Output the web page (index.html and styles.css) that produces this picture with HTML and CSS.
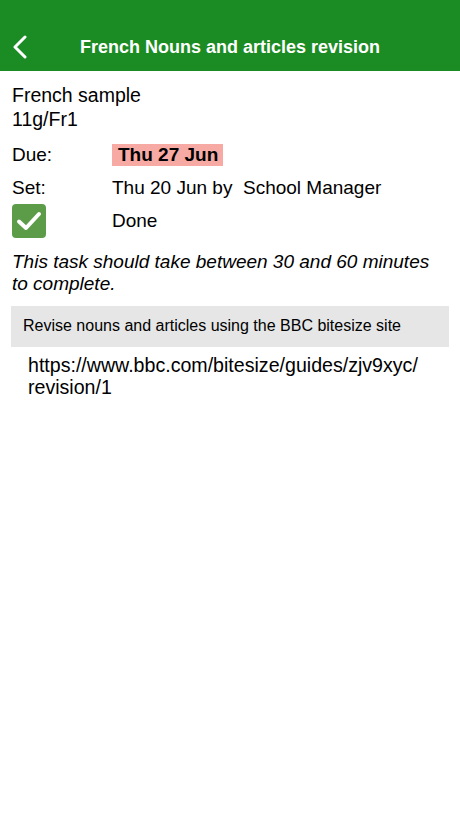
FILE: index.html
```html
<!DOCTYPE html>
<html lang="en">
<head>
    <meta charset="UTF-8">
    <meta name="viewport" content="width=device-width, initial-scale=1.0">
    <title>French Nouns and articles revision</title>
    <link rel="stylesheet" href="styles.css">
</head>
<body>
    <header class="nav-bar">
        <a class="back" href="#">
            <svg width="16" height="24" viewBox="0 0 16 24">
                <path d="M13 2 L3 12 L13 22" fill="none" stroke="#fff" stroke-width="3" stroke-linecap="round" stroke-linejoin="round"/>
            </svg>
        </a>
        <h1 class="nav-title">French Nouns and articles revision</h1>
    </header>

    <main class="task">
        <div class="group">
            <div>French sample</div>
            <div>11g/Fr1</div>
        </div>

        <div class="row row-due">
            <span class="label">Due:</span>
            <span class="due-date">Thu 27 Jun</span>
        </div>
        <div class="row row-set">
            <span class="label">Set:</span>
            <span>Thu 20 Jun by&nbsp; School Manager</span>
        </div>
        <div class="row row-done">
            <span class="label">
                <span class="checkbox">
                    <svg width="34" height="34" viewBox="0 0 34 34">
                        <path d="M7 17.5 L14 24 L27 10" fill="none" stroke="#fff" stroke-width="4" stroke-linecap="round" stroke-linejoin="round"/>
                    </svg>
                </span>
            </span>
            <span>Done</span>
        </div>

        <p class="duration">This task should take between 30 and 60 minutes to complete.</p>

        <div class="note">Revise nouns and articles using the BBC bitesize site</div>
        <p class="link">https://www.bbc.com/bitesize/guides/zjv9xyc/ revision/1</p>
    </main>
</body>
</html>
```

FILE: styles.css
```css
body {
    font-family: "Liberation Sans", Arial, sans-serif;
    background-color: #fff;
    color: #000;
    margin: 0;
    padding: 0;
}

.nav-bar {
    height: 71px;
    background-color: #1b8c23;
    display: flex;
    align-items: flex-end;
    justify-content: center;
    position: relative;
    box-sizing: border-box;
    padding-bottom: 12px;
}

.back {
    position: absolute;
    left: 12px;
    top: 35px;
    display: block;
    line-height: 0;
}

.nav-title {
    margin: 0;
    color: #fff;
    font-size: 18px;
    font-weight: bold;
    line-height: 24px;
}

.task {
    padding: 12px 12px;
    font-size: 19px;
}

.group {
    line-height: 24px;
    font-size: 19.5px;
}

.row {
    display: flex;
    align-items: center;
}

.label {
    width: 100px;
    flex-shrink: 0;
}

.row-due {
    margin-top: 13px;
    height: 22px;
}

.due-date {
    font-weight: bold;
    background-color: #f6aaa3;
    padding: 0 5px 0 6px;
    line-height: 22px;
}

.row-set {
    margin-top: 10px;
    line-height: 24px;
}

.row-done {
    margin-top: 4px;
}

.checkbox {
    display: block;
    width: 34px;
    height: 34px;
    border-radius: 4px;
    background-color: #5c9c48;
    line-height: 0;
}

.duration {
    font-style: italic;
    line-height: 22px;
    margin: 13px 0 0;
}

.note {
    margin: 11px -1px 0;
    background-color: #e6e6e6;
    font-size: 16px;
    padding: 11px 12px 12px;
    line-height: 18px;
}

.link {
    margin: 7px 0 0 16px;
    font-size: 19.6px;
    line-height: 22px;
    width: 400px;
}
```
